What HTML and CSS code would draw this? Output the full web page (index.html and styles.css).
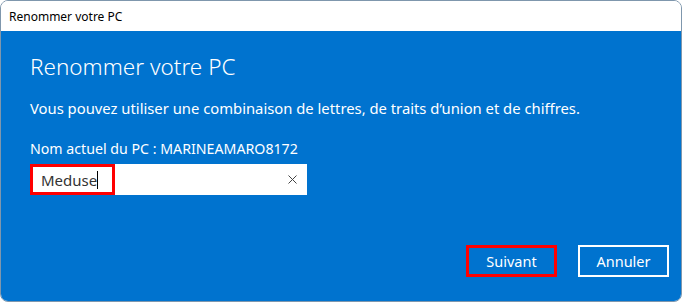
FILE: index.html
```html
<!DOCTYPE html>
<html>
<head>
    <meta charset="UTF-8">
    <title>Renommer votre PC</title>
    <link rel="stylesheet" href="styles.css">
</head>
<body>
    <div class="window">
        <div class="titlebar">Renommer votre PC</div>
        <div class="content">
            <h1>Renommer votre PC</h1>
            <p class="intro">Vous pouvez utiliser une combinaison de lettres, de traits d’union et de chiffres.</p>
            <div class="current">Nom actuel du PC : MARINEAMARO8172</div>
            <div class="field">
                <div class="value"><span class="typed">Meduse</span><span class="caret"></span></div>
                <svg class="clear" width="9" height="9" viewBox="0 0 9 9">
                    <path d="M0.5 0.5 L8.5 8.5 M8.5 0.5 L0.5 8.5" stroke="#444" stroke-width="1" fill="none"/>
                </svg>
            </div>
            <div class="actions">
                <button class="btn btn-next">Suivant</button>
                <button class="btn btn-cancel">Annuler</button>
            </div>
        </div>
    </div>
</body>
</html>
```

FILE: styles.css
```css
body {
    margin: 0;
    font-family: "Noto Sans", "Open Sans", sans-serif;
    background: #ffffff;
}
.window {
    width: 682px;
    height: 302px;
    box-sizing: border-box;
    border: 1px solid #7f97ad;
    border-radius: 8px;
    overflow: hidden;
    display: flex;
    flex-direction: column;
}
.titlebar {
    height: 30px;
    background: #ffffff;
    color: #000000;
    font-size: 12px;
    display: flex;
    align-items: center;
    padding-left: 8px;
}
.content {
    flex: 1;
    background: #0073cf;
    color: #ffffff;
    padding: 20px 12px 24px 29px;
    display: flex;
    flex-direction: column;
}
h1 {
    margin: 0;
    font-size: 22.5px;
    font-weight: 300;
    line-height: 32px;
}
.intro {
    margin: 16px 0 0 0;
    font-size: 14.8px;
    line-height: 18px;
}
.current {
    margin-top: 23px;
    font-size: 14.2px;
    line-height: 18px;
}
.field {
    margin-top: 6px;
    width: 277px;
    height: 31px;
    background: #ffffff;
    display: flex;
    align-items: center;
    justify-content: space-between;
}
.value {
    height: 100%;
    box-sizing: border-box;
    width: 85px;
    border: 3px solid #ff0000;
    display: flex;
    align-items: center;
    padding-left: 8px;
    color: #333333;
    font-size: 15px;
}
.caret {
    display: inline-block;
    width: 1px;
    height: 18px;
    background: #000000;
}
.clear {
    margin-right: 10px;
}
.actions {
    margin-top: auto;
    display: flex;
    justify-content: flex-end;
    gap: 21px;
}
.btn {
    height: 32px;
    box-sizing: border-box;
    width: 91px;
    background: #0073cf;
    color: #ffffff;
    font-family: "Noto Sans", "Open Sans", sans-serif;
    font-size: 14.5px;
    padding: 0;
}
.btn-next {
    border: 3px solid #ff0000;
}
.btn-cancel {
    border: 2px solid #ffffff;
}
```
